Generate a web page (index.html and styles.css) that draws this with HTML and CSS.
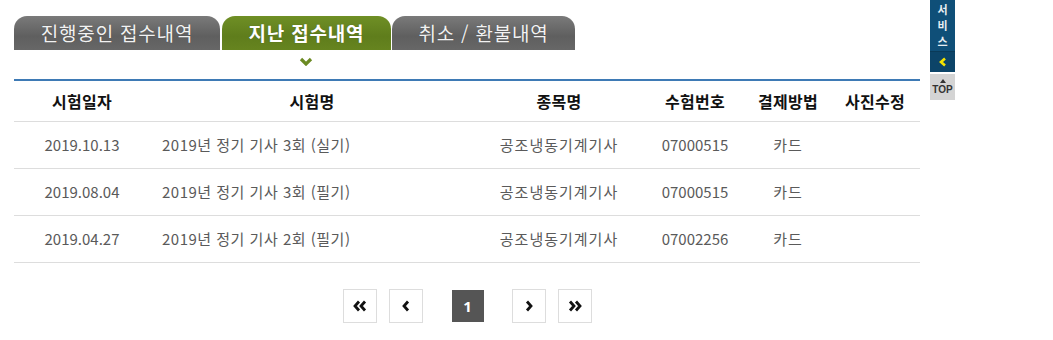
FILE: index.html
```html
<!DOCTYPE html>
<html lang="ko">
<head>
<meta charset="utf-8">
<link rel="stylesheet" href="styles.css">
</head>
<body>
<div class="wrap">
  <div class="tabs">
    <div class="tab tab1">진행중인 접수내역</div>
    <div class="tab tab2 active">지난 접수내역</div>
    <div class="tab tab3">취소 / 환불내역</div>
  </div>
  <div class="pointer-row">
    <svg class="pointer" width="14" height="9" viewBox="0 0 14 9"><polyline points="2,2 7,7 12,2" fill="none" stroke="#6b8a23" stroke-width="3.2"/></svg>
  </div>
  <table class="list">
    <colgroup>
      <col class="c1"><col class="c2"><col class="c3"><col class="c4"><col class="c5"><col class="c6">
    </colgroup>
    <thead>
      <tr><th>시험일자</th><th>시험명</th><th>종목명</th><th>수험번호</th><th>결제방법</th><th>사진수정</th></tr>
    </thead>
    <tbody>
      <tr><td>2019.10.13</td><td class="name">2019년 정기 기사 3회 (실기)</td><td class="ko">공조냉동기계기사</td><td>07000515</td><td class="ko">카드</td><td></td></tr>
      <tr><td>2019.08.04</td><td class="name">2019년 정기 기사 3회 (필기)</td><td class="ko">공조냉동기계기사</td><td>07000515</td><td class="ko">카드</td><td></td></tr>
      <tr><td>2019.04.27</td><td class="name">2019년 정기 기사 2회 (필기)</td><td class="ko">공조냉동기계기사</td><td>07002256</td><td class="ko">카드</td><td></td></tr>
    </tbody>
  </table>
  <div class="paging">
    <a class="pg first"><svg width="14" height="12" viewBox="0 0 14 12"><polyline points="6,1.5 2,6 6,10.5" fill="none" stroke="#111" stroke-width="2.8"/><polyline points="12,1.5 8,6 12,10.5" fill="none" stroke="#111" stroke-width="2.8"/></svg></a>
    <a class="pg prev"><svg width="8" height="12" viewBox="0 0 8 12"><polyline points="6,1.5 2,6 6,10.5" fill="none" stroke="#111" stroke-width="2.8"/></svg></a>
    <span class="pg cur">1</span>
    <a class="pg next"><svg width="8" height="12" viewBox="0 0 8 12"><polyline points="2,1.5 6,6 2,10.5" fill="none" stroke="#111" stroke-width="2.8"/></svg></a>
    <a class="pg last"><svg width="14" height="12" viewBox="0 0 14 12"><polyline points="2,1.5 6,6 2,10.5" fill="none" stroke="#111" stroke-width="2.8"/><polyline points="8,1.5 12,6 8,10.5" fill="none" stroke="#111" stroke-width="2.8"/></svg></a>
  </div>
</div>
<div class="side">
  <div class="svc"><span>서</span><span>비</span><span>스</span></div>
  <div class="fold"><svg width="10" height="10" viewBox="0 0 10 10"><polyline points="7,1.5 3,5 7,8.5" fill="none" stroke="#f5e400" stroke-width="2.6"/></svg></div>
  <div class="top"><span class="tri"></span><span class="toptxt">TOP</span></div>
</div>
</body>
</html>
```
FILE: styles.css
```css
* { box-sizing: border-box; }
html, body { margin: 0; padding: 0; background: #fff; }
body { font-family: "Noto Sans CJK KR", "Noto Sans", sans-serif; color: #333; width: 1053px; height: 340px; overflow: hidden; position: relative; }

.wrap { padding: 16px 0 0 14px; width: 920px; }

.tabs { display: flex; gap: 2px; height: 34px; }
.tab {
  height: 34px;
  border-radius: 13px 13px 0 0;
  color: #f2f2f2;
  font-size: 19px;
  line-height: 34px;
  text-align: center;
  background: linear-gradient(#7a7a7a, #5f5f5f 60%, #676767);
  text-shadow: 0 0 1px rgba(0,0,0,0.3);
  letter-spacing: 0.8px;
}
.tab1 { width: 206px; }
.tab2 { width: 169px; }
.tab3 { width: 183px; margin-left: -1px; }
.tab.active { background: linear-gradient(#6f8f25, #5f7d1c 60%, #66841f); font-weight: bold; color: #fff; }

.pointer-row { height: 29px; padding-left: 285px; padding-top: 7px; }
.pointer { display: block; }

.list { width: 906px; border-collapse: collapse; table-layout: fixed; border-top: 2px solid #3e7ab5; }
.c1 { width: 136px; } .c2 { width: 324px; } .c3 { width: 170px; } .c4 { width: 102px; } .c5 { width: 84px; } .c6 { width: 90px; }
.list th { height: 41px; font-size: 16px; font-weight: bold; color: #111; text-align: center; border-bottom: 1px solid #ddd; padding: 0; letter-spacing: 0.3px; }
.list td { height: 47px; font-size: 15px; color: #5a5a5a; text-align: center; border-bottom: 1px solid #ddd; padding: 0; }
.list td.name { text-align: left; padding-left: 12px; letter-spacing: 0.5px; }
.list td.ko { letter-spacing: 1px; }

.paging { display: flex; justify-content: center; align-items: center; margin-top: 26px; width: 906px; }
.pg { width: 34px; height: 34px; border: 1px solid #ddd; background: #fff; display: flex; align-items: center; justify-content: center; }
.pg svg { display: block; }
.prev { margin-left: 12px; }
.cur { width: 32px; height: 32px; border: none; background: #555; color: #fff; font-weight: bold; font-size: 15px; font-family: "Noto Sans", sans-serif; margin-left: 29px; }
.next { margin-left: 28px; }
.last { margin-left: 12px; }

.side { position: absolute; left: 930px; top: 0; width: 25px; }
.svc { height: 52px; background: #0f4f78; color: #e8eef2; font-size: 11px; font-weight: bold; text-align: center; padding-top: 1px; overflow: hidden; border-bottom: 1px solid #0a3a58; display: flex; flex-direction: column; align-items: center; }
.svc span { display: block; height: 16px; line-height: 16px; }
.fold { height: 20px; background: #0c4468; display: flex; align-items: center; justify-content: center; }
.top { margin-top: 2px; height: 26px; background: #d4d4d4; display: flex; flex-direction: column; align-items: center; justify-content: center; }
.tri { width: 0; height: 0; border-left: 3px solid transparent; border-right: 3px solid transparent; border-bottom: 4px solid #333; margin-bottom: 2px; }
.toptxt { font-family: "Liberation Sans", sans-serif; font-size: 10px; font-weight: bold; color: #333; line-height: 10px; }
```
